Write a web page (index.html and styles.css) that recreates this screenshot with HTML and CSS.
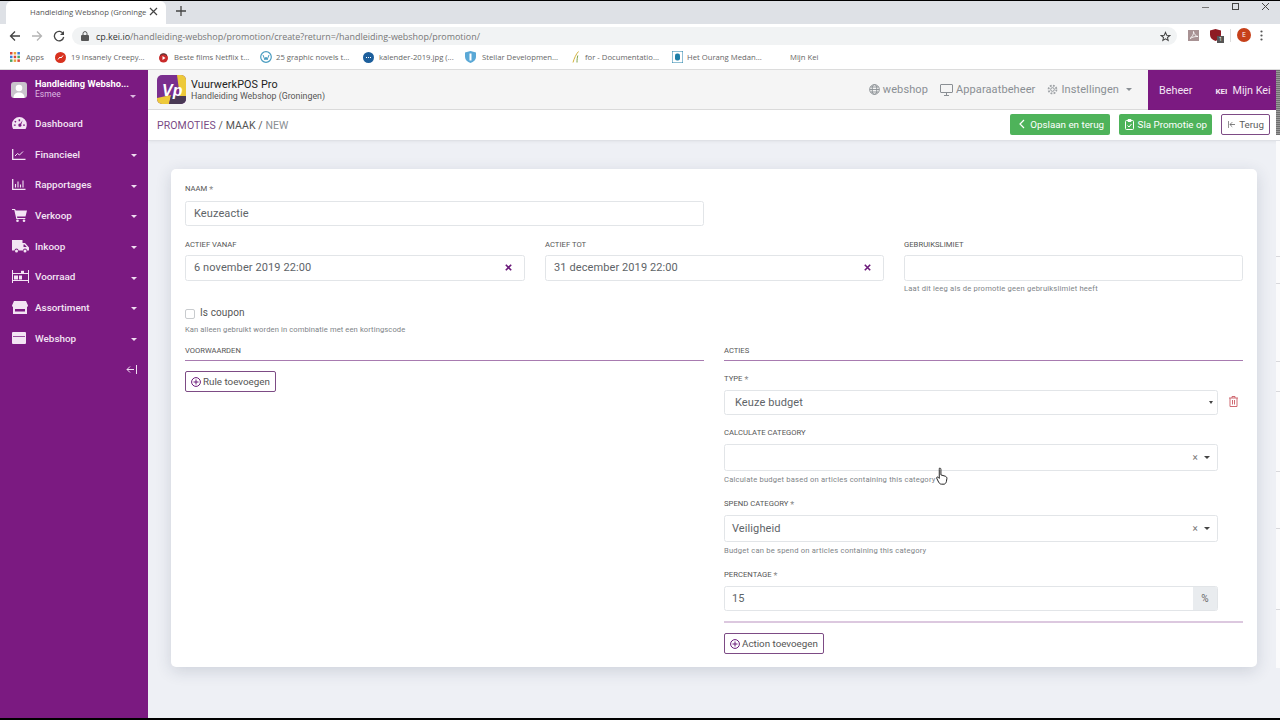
FILE: index.html
```html
<!DOCTYPE html>
<html lang="en">
<head>
    <meta charset="UTF-8">
    <meta name="viewport" content="width=device-width, initial-scale=1.0">
    <title>Handleiding Webshop</title>
    <link rel="stylesheet" href="styles.css">
</head>
<body>

    <div class="browser">
        <div class="tab-strip">
            <div class="tab">
                <span class="tab-title">Handleiding Webshop (Groninge</span>
                <svg class="tab-close" width="9" height="9" viewBox="0 0 9 9"><path d="M1 1l7 7M8 1L1 8" stroke="#444" stroke-width="1.2"/></svg>
            </div>
            <svg class="tab-new" width="10" height="10" viewBox="0 0 10 10"><path d="M5 0v10M0 5h10" stroke="#444" stroke-width="1.3"/></svg>
            <div class="window-buttons">
                <svg width="10" height="10" viewBox="0 0 10 10"><path d="M1 5.5h7" stroke="#777"/></svg>
                <svg width="10" height="10" viewBox="0 0 10 10"><rect x="1.5" y="1.5" width="6" height="6" fill="none" stroke="#444"/></svg>
                <svg width="10" height="10" viewBox="0 0 10 10"><path d="M1 1l7 7M8 1L1 8" stroke="#444"/></svg>
            </div>
        </div>
        <div class="toolbar">
            <svg class="nav-icon" width="12" height="12" viewBox="0 0 12 12"><path d="M11 6H1.5M6 1.5L1.5 6 6 10.5" fill="none" stroke="#444" stroke-width="1.3"/></svg>
            <svg class="nav-icon" width="12" height="12" viewBox="0 0 12 12"><path d="M1 6h9.5M6 1.5L10.5 6 6 10.5" fill="none" stroke="#b4b4b4" stroke-width="1.3"/></svg>
            <svg class="nav-icon" width="12" height="12" viewBox="0 0 12 12"><path d="M10.3 4A4.7 4.7 0 1 0 10.7 7" fill="none" stroke="#444" stroke-width="1.3"/><path d="M11 1v4H7z" fill="#444"/></svg>
            <div class="omnibox">
                <svg width="8" height="10" viewBox="0 0 8 10"><rect y="4" width="8" height="6" rx="1" fill="#555"/><path d="M2 4V2.6a2 2 0 0 1 4 0V4" fill="none" stroke="#555"/></svg>
                <span class="url"><b>cp.kei.io</b>/handleiding-webshop/promotion/create?return=/handleiding-webshop/promotion/</span>
                <svg class="star" width="11" height="11" viewBox="0 0 24 24"><path d="M12 3l2.7 6.2 6.7.6-5.1 4.4 1.6 6.6L12 17.3l-5.9 3.5 1.6-6.6L2.6 9.8l6.7-.6z" fill="none" stroke="#444" stroke-width="2.2"/></svg>
            </div>
            <div class="extensions">
                <span class="ext-pdf">
                    <svg width="10" height="10" viewBox="0 0 10 10"><path d="M1 8.5C3 7 5 4 4.5 1.5 5 4 6.5 6 9 6.5 6.5 6.3 3.5 7 1 8.5z" fill="none" stroke="#fff" stroke-width=".8"/></svg>
                </span>
                <span class="ext-shield">
                    <svg width="11" height="12" viewBox="0 0 11 12"><path d="M5.5 0L11 1.5V6c0 3-2.5 5-5.5 6C2.5 11 0 9 0 6V1.5z" fill="#8e1b24"/></svg>
                    <span class="ext-count">1</span>
                </span>
                <span class="ext-sep"></span>
                <span class="profile">E</span>
                <svg width="3" height="11" viewBox="0 0 3 11"><circle cx="1.5" cy="1.5" r="1.1" fill="#555"/><circle cx="1.5" cy="5.5" r="1.1" fill="#555"/><circle cx="1.5" cy="9.5" r="1.1" fill="#555"/></svg>
            </div>
        </div>
        <div class="bookmarks">
            <span class="bookmark bookmark-apps">
                <svg width="10" height="10" viewBox="0 0 10 10">
                    <rect width="2.5" height="2.5" fill="#d9473a"/><rect x="3.7" width="2.5" height="2.5" fill="#e8a33d"/><rect x="7.4" width="2.5" height="2.5" fill="#3c7dd9"/>
                    <rect y="3.7" width="2.5" height="2.5" fill="#3c7dd9"/><rect x="3.7" y="3.7" width="2.5" height="2.5" fill="#d9473a"/><rect x="7.4" y="3.7" width="2.5" height="2.5" fill="#4aa564"/>
                    <rect y="7.4" width="2.5" height="2.5" fill="#4aa564"/><rect x="3.7" y="7.4" width="2.5" height="2.5" fill="#e8a33d"/><rect x="7.4" y="7.4" width="2.5" height="2.5" fill="#d9473a"/>
                </svg>
                Apps
            </span>
            <span class="bookmark bookmark-creepy"><svg width="11" height="11" viewBox="0 0 11 11"><circle cx="5.5" cy="5.5" r="5.5" fill="#d8321f"/><path d="M3 7.5l2-2.5 1 1 2-2.5" fill="none" stroke="#fff"/></svg>19 Insanely Creepy...</span>
            <span class="bookmark bookmark-films"><svg width="11" height="11" viewBox="0 0 11 11"><circle cx="5.5" cy="6" r="4.5" fill="#c92a2a"/><path d="M2 3.5a4.5 4.5 0 0 1 7 0" fill="none" stroke="#333"/><path d="M4.5 4v4l3-2z" fill="#fff"/></svg>Beste films Netflix t...</span>
            <span class="bookmark bookmark-novels"><svg width="12" height="12" viewBox="0 0 12 12"><circle cx="6" cy="6" r="5.3" fill="#fff" stroke="#4a9cc0" stroke-width="1.2"/><path d="M3 4l2 5 1-3 1 3 2-5" fill="none" stroke="#4a9cc0"/></svg>25 graphic novels t...</span>
            <span class="bookmark bookmark-kalender"><svg width="11" height="11" viewBox="0 0 11 11"><circle cx="5.5" cy="5.5" r="5.5" fill="#1d5f9c"/><path d="M3 5.5h5" stroke="#fff" stroke-dasharray="1 1"/></svg>kalender-2019.jpg (...</span>
            <span class="bookmark bookmark-stellar"><svg width="11" height="12" viewBox="0 0 11 12"><path d="M5.5 0L11 1.5V6c0 3-2.5 5-5.5 6C2.5 11 0 9 0 6V1.5z" fill="#5aa8d6"/><path d="M5.5 2.5v7" stroke="#fff" stroke-width="2"/></svg>Stellar Developmen...</span>
            <span class="bookmark bookmark-docs"><svg width="8" height="12" viewBox="0 0 8 12"><path d="M1 11.5C2 8 4 3 6.5.5" fill="none" stroke="#d4b23c"/><path d="M5 11.5c0-3 .3-5 .8-7" fill="none" stroke="#7da34a"/></svg>for - Documentatio...</span>
            <span class="bookmark bookmark-ourang"><svg width="11" height="12" viewBox="0 0 11 12"><rect width="11" height="12" fill="#fff" stroke="#1e7fa8"/><rect x="3" y="2.5" width="5" height="7" rx="2" fill="#1e7fa8"/></svg>Het Ourang Medan...</span>
            <span class="bookmark bookmark-kei">Mijn Kei</span>
        </div>
    </div>

    <div class="app">
        <aside class="sidebar">
            <div class="account">
                <div class="avatar">
                    <svg width="16" height="16" viewBox="0 0 16 16"><circle cx="8" cy="6" r="3.3" fill="#fff"/><path d="M2.5 16c0-4 2.5-5.5 5.500-5.500s5.500 1.500 5.500 5.500z" fill="#fff"/></svg>
                </div>
                <div class="account-text">
                    <div class="account-name">Handleiding Websho...</div>
                    <div class="account-user">Esmee</div>
                </div>
                <span class="account-caret"></span>
            </div>
            <nav class="menu">
                <a class="menu-item">
                    <svg class="menu-icon" preserveAspectRatio="xMinYMid meet" width="15" height="12" viewBox="0 0 16 13"><path fill-rule="evenodd" d="M8 0a8 8 0 0 1 8 8c0 2-.5 3.5-1.3 5H1.300C.5 11.500 0 10 0 8a8 8 0 0 1 8-8zM7.200 2.500v2h1.600v-2zM3.500 4L2.500 5.200l1.300 1 1-1.200zM2 8v1.500h2V8zM12 8v1.500h2V8zM11.500 3.500L8.800 7.200a1.700 1.700 0 1 0 1.200.8z"/></svg>
                    Dashboard
                </a>
                <a class="menu-item">
                    <svg class="menu-icon" preserveAspectRatio="xMinYMid meet" width="13" height="11" viewBox="0 0 14 11"><path d="M.7 0v10.300H13.500" fill="none" stroke="currentColor" stroke-width="1.300"/><path d="M3 7l2.500-2.500L7.500 6l3.500-3.500" fill="none" stroke="currentColor"/></svg>
                    Financieel<span class="caret"></span>
                </a>
                <a class="menu-item">
                    <svg class="menu-icon" preserveAspectRatio="xMinYMid meet" width="13" height="11" viewBox="0 0 14 11"><path d="M.7 0v10.300H13.500" fill="none" stroke="currentColor" stroke-width="1.300"/><path d="M3.500 8.500V5M6 8.500V2.500M8.500 8.500V5.500M11 8.500V1.500" stroke="currentColor" stroke-width="1.100"/></svg>
                    Rapportages<span class="caret"></span>
                </a>
                <a class="menu-item">
                    <svg class="menu-icon" preserveAspectRatio="xMinYMid meet" width="15" height="13" viewBox="0 0 15 13"><path d="M0 0h3l.8 1.500H15L13.500 7.500H5l.3 1.500h8v1H4.300L2.300 1H0z"/><circle cx="5.500" cy="11.700" r="1.300"/><circle cx="12" cy="11.700" r="1.300"/></svg>
                    Verkoop<span class="caret"></span>
                </a>
                <a class="menu-item">
                    <svg class="menu-icon" preserveAspectRatio="xMinYMid meet" width="17" height="13" viewBox="0 0 17 13"><path fill-rule="evenodd" d="M0 0h10.500v3H13l4 4.500V10.500h-2a2 2 0 0 0-4 0H6.500a2 2 0 0 0-4 0H0zM11.500 4.500V7h3.300l-2.200-2.500z"/><circle cx="4.500" cy="11" r="1.500"/><circle cx="13" cy="11" r="1.500"/></svg>
                    Inkoop<span class="caret"></span>
                </a>
                <a class="menu-item">
                    <svg class="menu-icon" preserveAspectRatio="xMinYMid meet" width="17" height="13" viewBox="0 0 17 13"><path d="M.5 0v13M16.500 0v13" stroke="currentColor"/><path d="M1 3.500h15M1 10.500h15" stroke="currentColor"/><rect x="2" y="5.500" width="4" height="4"/><rect x="7" y="5.500" width="3" height="4"/><rect x="9" y=".8" width="3" height="2.500"/></svg>
                    Voorraad<span class="caret"></span>
                </a>
                <a class="menu-item">
                    <svg class="menu-icon" preserveAspectRatio="xMinYMid meet" width="16" height="13" viewBox="0 0 16 13"><path fill-rule="evenodd" d="M2 0h12l2 4.500a2 2 0 0 1-1 1.500v7H1V6a2 2 0 0 1-1-1.500zM3 8v2.500h10V8z"/></svg>
                    Assortiment<span class="caret"></span>
                </a>
                <a class="menu-item">
                    <svg class="menu-icon" preserveAspectRatio="xMinYMid meet" width="14" height="12" viewBox="0 0 14 12"><path fill-rule="evenodd" d="M1 0h12a1 1 0 0 1 1 1v10a1 1 0 0 1-1 1H1a1 1 0 0 1-1-1V1a1 1 0 0 1 1-1zM1 4v.800h12V4z"/></svg>
                    Webshop<span class="caret"></span>
                </a>
            </nav>
            <div class="collapse">
                <svg width="11" height="9" viewBox="0 0 11 9"><path d="M10.500 0v9" stroke="currentColor"/><path d="M8 4.500H1M4 1.500l-3 3 3 3" fill="none" stroke="currentColor"/></svg>
            </div>
        </aside>

        <main class="main">
            <header class="topbar">
                <div class="brand">
                    <svg class="logo" width="29" height="29" viewBox="0 0 29 29">
                        <rect width="29" height="29" rx="5" fill="#7a2f8e"/>
                        <path d="M20 0h4a5 5 0 0 1 5 5v17h-6z" fill="#edc93a"/>
                        <path d="M0 23l14-3-2 9H5a5 5 0 0 1-5-5z" fill="#edc93a"/>
                        <path d="M12 29l2-8h15v3a5 5 0 0 1-5 5z" fill="#4a3a55"/>
                        <text x="5" y="21" class="logo-text">Vp</text>
                    </svg>
                    <div class="brand-text">
                        <div class="brand-name">VuurwerkPOS Pro</div>
                        <div class="brand-sub">Handleiding Webshop (Groningen)</div>
                    </div>
                </div>
                <nav class="topnav">
                    <a class="topnav-item">
                        <svg width="11" height="11" viewBox="0 0 12 12" fill="none" stroke="currentColor"><circle cx="6" cy="6" r="5.300"/><ellipse cx="6" cy="6" rx="2.500" ry="5.300"/><path d="M.7 6h10.600M1.500 3.300h9M1.500 8.700h9"/></svg>
                        webshop
                    </a>
                    <a class="topnav-item">
                        <svg width="13" height="12" viewBox="0 0 13 12" fill="none" stroke="currentColor"><rect x=".5" y=".5" width="12" height="8" rx=".5"/><path d="M4 11.500h5M6.500 9v2.500" /></svg>
                        Apparaatbeheer
                    </a>
                    <a class="topnav-item">
                        <svg width="11" height="11" viewBox="0 0 12 12" fill="none" stroke="currentColor"><circle cx="6" cy="6" r="2"/><circle cx="6" cy="6" r="4.300" stroke-width="2" stroke-dasharray="2 1.370" opacity=".8"/></svg>
                        Instellingen<span class="topnav-caret"></span>
                    </a>
                </nav>
                <div class="account-tabs">
                    <a class="account-tab">Beheer</a>
                    <a class="account-tab account-tab-kei"><small>KEI</small>Mijn Kei</a>
                </div>
            </header>

            <div class="breadcrumb-bar">
                <div class="breadcrumbs">
                    <a class="crumb-link">PROMOTIES</a> / <span class="crumb-mid">MAAK</span> / <span class="crumb-new">NEW</span>
                </div>
                <div class="actions">
                    <a class="btn btn-green">
                        <svg width="6" height="10" viewBox="0 0 6 10"><path d="M5 1L1 5l4 4" fill="none" stroke="currentColor" stroke-width="1.200"/></svg>
                        Opslaan en terug
                    </a>
                    <a class="btn btn-green">
                        <svg width="9" height="11" viewBox="0 0 9 11" fill="none" stroke="currentColor"><rect x=".5" y="1.500" width="8" height="9" rx="1"/><path d="M3 .5h3v2H3zM2.500 6.500l1.500 1.500 2.500-3"/></svg>
                        Sla Promotie op
                    </a>
                    <a class="btn btn-outline">
                        <svg width="10" height="9" viewBox="0 0 10 9" fill="none" stroke="currentColor"><path d="M.5 0v9M10 4.500H2.500M5.500 1.500l-3 3 3 3"/></svg>
                        Terug
                    </a>
                </div>
            </div>

            <div class="content">
                <section class="card">
                    <div class="field field-name">
                        <label class="field-label">NAAM <i>*</i></label>
                        <div class="input">Keuzeactie</div>
                    </div>

                    <div class="row-three">
                        <div class="field">
                            <label class="field-label">ACTIEF VANAF</label>
                            <div class="input input-date">6 november 2019 22:00
                                <svg width="7" height="7" viewBox="0 0 7 7"><path d="M.8.8l5.400 5.400M6.200.8L.8 6.200" stroke="#6b1a7a" stroke-width="1.600"/></svg>
                            </div>
                        </div>
                        <div class="field">
                            <label class="field-label">ACTIEF TOT</label>
                            <div class="input input-date">31 december 2019 22:00
                                <svg width="7" height="7" viewBox="0 0 7 7"><path d="M.8.8l5.400 5.400M6.200.8L.8 6.200" stroke="#6b1a7a" stroke-width="1.600"/></svg>
                            </div>
                        </div>
                        <div class="field">
                            <label class="field-label">GEBRUIKSLIMIET</label>
                            <div class="input input-date"></div>
                            <p class="help">Laat dit leeg als de promotie geen gebruikslimiet heeft</p>
                        </div>
                    </div>

                    <div class="coupon">
                        <div class="coupon-check">
                            <span class="checkbox"></span>
                            <span class="coupon-label">Is coupon</span>
                        </div>
                        <p class="help">Kan alleen gebruikt worden in combinatie met een kortingscode</p>
                    </div>

                    <div class="columns">
                        <div class="column">
                            <h4 class="section-title">VOORWAARDEN</h4>
                            <a class="btn-add">
                                <svg width="10" height="10" viewBox="0 0 10 10" fill="none" stroke="#6b1a7a"><circle cx="5" cy="5" r="4.400"/><path d="M5 2.500v5M2.500 5h5"/></svg>
                                Rule toevoegen
                            </a>
                        </div>
                        <div class="column">
                            <h4 class="section-title">ACTIES</h4>
                            <div class="action-block">
                                <div class="field field-type">
                                    <label class="field-label">TYPE <i>*</i></label>
                                    <div class="type-row">
                                        <div class="input input-select">Keuze budget<span class="select-arrow"></span></div>
                                        <svg class="trash" width="9" height="11" viewBox="0 0 9 11" fill="none" stroke="#cf6a72"><path d="M0 2h9M3 2V.5h3V2M1 2v8.500h7V2M3.500 4v4.500M5.500 4v4.500"/></svg>
                                    </div>
                                </div>
                                <div class="field field-wide">
                                    <label class="field-label">CALCULATE CATEGORY</label>
                                    <div class="input input-tall"><span class="tall-value"></span><span class="clear">×</span><span class="tall-arrow"></span></div>
                                    <p class="help">Calculate budget based on articles containing this category</p>
                                </div>
                                <div class="field field-wide">
                                    <label class="field-label">SPEND CATEGORY <i>*</i></label>
                                    <div class="input input-tall"><span class="tall-value">Veiligheid</span><span class="clear">×</span><span class="tall-arrow"></span></div>
                                    <p class="help">Budget can be spend on articles containing this category</p>
                                </div>
                                <div class="field field-wide">
                                    <label class="field-label">PERCENTAGE <i>*</i></label>
                                    <div class="input input-group"><span class="group-value">15</span><span class="group-addon">%</span></div>
                                </div>
                            </div>
                            <div class="action-divider"></div>
                            <a class="btn-add">
                                <svg width="10" height="10" viewBox="0 0 10 10" fill="none" stroke="#6b1a7a"><circle cx="5" cy="5" r="4.400"/><path d="M5 2.500v5M2.500 5h5"/></svg>
                                Action toevoegen
                            </a>
                        </div>
                    </div>
                </section>
            </div>
        </main>
    </div>

    <svg class="cursor" width="12" height="18" viewBox="0 0 11 16"><path d="M3 1c.8-.6 1.500 0 1.500 1v5l4 1.200c1 .4 1.500 1 1.500 2l-.5 3c-.3 1.200-1 2-2 2.300H5c-1 0-1.800-.6-2.500-1.700L.6 10c-.3-.7.500-1.500 1.400-.8l1 1V2z" fill="#fff" stroke="#222" stroke-width=".9"/></svg>
    <div class="edge-top"></div>
    <div class="edge-page">
        <span class="edge-line edge-line-1"></span>
        <span class="edge-line edge-line-2"></span>
        <span class="edge-line edge-line-3"></span>
        <span class="edge-line edge-line-4"></span>
        <span class="edge-line edge-line-5"></span>
        <span class="edge-line edge-line-6"></span>
        <span class="edge-line edge-line-7"></span>
    </div>

</body>
</html>
```

FILE: styles.css
```css
* {
    box-sizing: border-box;
}
body {
    margin: 0;
    height: 720px;
    overflow: hidden;
    display: flex;
    flex-direction: column;
    position: relative;
    font-family: Roboto, 'Liberation Sans', sans-serif;
    color: #495057;
    background-color: #eef0f5;
    border-top: 1px solid #000;
    border-bottom: 2px solid #000;
}

/* browser chrome */
.browser {
    flex: none;
    font-family: 'Open Sans', 'Liberation Sans', sans-serif;
}
.tab-strip {
    height: 23px;
    display: flex;
    align-items: flex-end;
    background-color: #dee1e6;
    padding-left: 6px;
}
.tab {
    width: 160px;
    height: 23px;
    display: flex;
    align-items: center;
    justify-content: space-between;
    padding: 0 8px 2px 24px;
    background-color: #fff;
    border-radius: 6px 6px 0 0;
    font-size: 7.7px;
    color: #555;
}
.tab-title {
    white-space: nowrap;
}
.tab-new {
    margin: 0 0 8px 10px;
}
.window-buttons {
    margin-left: auto;
    align-self: flex-start;
    display: flex;
    gap: 20px;
    padding: 0 9px 0 0;
    height: 12px;
    align-items: center;
}
.toolbar {
    height: 21px;
    display: flex;
    align-items: flex-end;
    background-color: #fff;
    padding-left: 9px;
    gap: 10px;
}
.nav-icon {
    flex: none;
    margin-bottom: 3px;
}
.omnibox {
    flex: none;
    width: 1105px;
    height: 18px;
    margin-left: -3px;
    display: flex;
    align-items: center;
    gap: 7px;
    padding: 0 6px 0 9px;
    background-color: #f1f3f4;
    border-radius: 9px;
    font-size: 8.95px;
    color: #777;
}
.url b {
    font-weight: 400;
    color: #333;
}
.star {
    margin-left: auto;
}
.extensions {
    display: flex;
    align-items: center;
    gap: 9px;
    margin-left: 1px;
    margin-bottom: 3px;
}
.ext-pdf {
    width: 11px;
    height: 11px;
    display: flex;
    align-items: center;
    justify-content: center;
    background-color: #a89294;
}
.ext-shield {
    position: relative;
    display: flex;
    margin-left: 2px;
}
.ext-count {
    position: absolute;
    right: -3px;
    bottom: -2px;
    width: 7px;
    height: 7px;
    background-color: #555;
    color: #fff;
    font-size: 6px;
    line-height: 7px;
    text-align: center;
}
.ext-sep {
    width: 1px;
    height: 13px;
    background-color: #ddd;
    margin: 0 -3px 0 0;
}
.profile {
    width: 14px;
    height: 14px;
    border-radius: 50%;
    background-color: #c6401a;
    color: #fff;
    font-size: 7px;
    line-height: 14px;
    text-align: center;
}
.bookmarks {
    height: 25px;
    display: flex;
    align-items: center;
    background-color: #fff;
    border-bottom: 1px solid #dcdcdc;
    font-size: 7.7px;
    color: #666;
    padding-left: 10px;
    white-space: nowrap;
}
.bookmark {
    display: flex;
    align-items: center;
    gap: 5px;
}
.bookmark-apps { width: 45px; gap: 6px; }
.bookmark-creepy { width: 103px; }
.bookmark-films { width: 102px; }
.bookmark-novels { width: 103px; gap: 4px; }
.bookmark-kalender { width: 102px; }
.bookmark-stellar { width: 103px; gap: 6px; }
.bookmark-docs { width: 104px; padding-left: 4px; }
.bookmark-ourang { width: 118px; gap: 4px; }

/* app */
.app {
    flex: 1;
    min-height: 0;
    display: flex;
}
.sidebar {
    flex: none;
    width: 148px;
    display: flex;
    flex-direction: column;
    background-color: #7b1a81;
    color: #fff;
}
.account {
    height: 38px;
    display: flex;
    align-items: center;
    padding: 0 11px;
    position: relative;
}
.avatar {
    flex: none;
    width: 16px;
    height: 16px;
    margin-top: 2px;
    border-radius: 3px;
    overflow: hidden;
    background-color: #c9c4cc;
}
.account-text {
    margin-left: 8px;
    line-height: 10px;
}
.account-name {
    font-size: 9.3px;
    font-weight: 700;
    white-space: nowrap;
}
.account-user {
    font-size: 8.5px;
    color: #dcb9e0;
}
.account-caret {
    position: absolute;
    right: 12px;
    top: 25px;
    border-style: solid;
    border-width: 3px 3px 0;
    border-color: #dcb9e0 transparent transparent;
}
.menu {
    display: flex;
    flex-direction: column;
}
.menu-item {
    height: 30.7px;
    display: flex;
    align-items: center;
    padding: 0 11px 0 12px;
    font-size: 9.9px;
    font-weight: 500;
    color: #f3e4f4;
}
.menu-icon {
    width: 23px;
    flex: none;
    fill: currentColor;
}
.caret {
    margin-left: auto;
    margin-top: 3px;
    border-style: solid;
    border-width: 3.5px 3px 0;
    border-color: #f0dff2 transparent transparent;
}
.collapse {
    display: flex;
    justify-content: flex-end;
    padding: 11px 11px 0 0;
    color: #f0dff2;
}
.main {
    flex: 1;
    min-width: 0;
    display: flex;
    flex-direction: column;
}
.topbar {
    flex: none;
    height: 40px;
    display: flex;
    align-items: center;
    padding-left: 9px;
    background-color: #f5f5f5;
    border-bottom: 1px solid #dcdcdc;
}
.brand {
    display: flex;
    align-items: center;
    gap: 5px;
}
.brand-text {
    padding-top: 1px;
}
.logo-text {
    font-family: 'Liberation Sans', sans-serif;
    font-size: 16px;
    font-weight: 700;
    font-style: italic;
    fill: #fff;
}
.brand-name {
    font-size: 10.8px;
    line-height: 12px;
    color: #222;
    letter-spacing: .1px;
}
.brand-sub {
    font-size: 8.8px;
    line-height: 10px;
    color: #555;
}
.topnav {
    margin-left: auto;
    display: flex;
    gap: 12px;
    color: #8a8f94;
    font-size: 11px;
    padding-right: 16px;
}
.topnav-item {
    display: flex;
    align-items: center;
    gap: 3px;
    letter-spacing: .1px;
}
.topnav-caret {
    margin-left: 4px;
    border-style: solid;
    border-width: 3.5px 3.5px 0;
    border-color: #8a8f94 transparent transparent;
}
.account-tabs {
    align-self: stretch;
    margin-bottom: -1px;
    display: flex;
    align-items: center;
    background-color: #7b1a81;
    color: #f3e4f4;
    font-size: 10.8px;
    width: 132px;
    padding-left: 11px;
}
.account-tab-kei {
    margin-left: 23px;
    white-space: nowrap;
}
.account-tab-kei small {
    font-size: 8px;
    font-weight: 700;
    margin-right: 5px;
}
.breadcrumb-bar {
    flex: none;
    height: 31px;
    display: flex;
    align-items: center;
    justify-content: space-between;
    padding: 0 10px 0 9px;
    background-color: #fff;
    border-bottom: 1px solid #dfe1e6;
    box-shadow: 0 1px 3px rgba(0, 0, 0, 0.05);
}
.breadcrumbs {
    font-size: 10.5px;
    color: #555;
    letter-spacing: .1px;
}
.crumb-link {
    color: #7a4a86;
}
.crumb-new {
    color: #8a8f94;
}
.actions {
    display: flex;
    gap: 9px;
    margin-bottom: 2px;
}
.btn {
    height: 21px;
    display: flex;
    align-items: center;
    gap: 4px;
    border-radius: 2px;
    font-size: 9.8px;
    padding: 0 5px 0 5.5px;
}
.btn:first-child {
    gap: 5px;
    padding: 0 6px 0 9px;
}
.btn-green {
    background-color: #4eb35a;
    color: #fff;
}
.btn-outline {
    background-color: #fff;
    border: 1px solid #7d4b85;
    color: #5c5c5c;
    width: 49px;
}
.content {
    flex: 1;
    min-height: 0;
    padding: 28px 23px 0;
}
.card {
    background-color: #fff;
    border-radius: 5px;
    box-shadow: 0 4px 16px rgba(40, 50, 80, 0.16);
    padding: 15px 14px 14px;
    height: 498px;
}
.field-label {
    display: block;
    font-size: 7.7px;
    line-height: 10px;
    color: #555;
    margin-bottom: 6px;
}
.field-label i {
    font-style: normal;
    color: #888;
    font-size: 9px;
    line-height: 0;
    vertical-align: -2px;
}
.input {
    height: 25px;
    display: flex;
    align-items: center;
    padding: 0 8px;
    background-color: #fff;
    border: 1px solid #e2e5e8;
    border-radius: 2.5px;
    font-size: 11px;
    color: #5e6468;
    letter-spacing: .1px;
}
.field-name {
    width: 519px;
}
.field-name .field-label {
    margin-bottom: 7px;
}
.row-three {
    display: grid;
    grid-template-columns: 340px 339px 339px;
    column-gap: 20px;
    margin-top: 14px;
}
.row-three .field-label {
    margin-bottom: 5px;
}
.input-date {
    height: 26px;
    justify-content: space-between;
    padding: 0 12px 1px 8px;
}
.help {
    margin: 4px 0 0;
    font-size: 7.6px;
    line-height: 9px;
    color: #808488;
    letter-spacing: .2px;
}
.row-three .help {
    margin-top: 3px;
}
.coupon {
    margin-top: 14px;
}
.coupon .help {
    margin-top: 6px;
    letter-spacing: .1px;
}
.coupon-check {
    display: flex;
    align-items: center;
    gap: 5px;
}
.checkbox {
    width: 10px;
    height: 10px;
    margin-top: 2px;
    border: 1px solid #c8cbce;
    border-radius: 2px;
    background-color: #fff;
}
.coupon-label {
    font-size: 10px;
    line-height: 12px;
    color: #555;
    letter-spacing: .1px;
}
.columns {
    display: grid;
    grid-template-columns: 519px 519px;
    column-gap: 20px;
    margin-top: 12px;
}
.section-title {
    margin: 0 0 10px;
    height: 15px;
    font-size: 7.6px;
    font-weight: 400;
    line-height: 10px;
    color: #555;
    border-bottom: 1px solid #a87bb0;
}
.btn-add {
    height: 21px;
    display: inline-flex;
    align-items: center;
    gap: 2px;
    padding: 0 5px;
    border: 1px solid #7d4b85;
    border-radius: 2px;
    font-size: 9.8px;
    color: #555;
}
.action-block {
    display: flex;
    flex-direction: column;
}
.field-type {
    margin-top: 3px;
}
.type-row {
    display: flex;
    align-items: center;
    gap: 11px;
}
.input-select {
    width: 494px;
    justify-content: space-between;
    padding: 0 4px 0 10px;
}
.select-arrow {
    border-style: solid;
    border-width: 3.5px 2.5px 0;
    border-color: #444 transparent transparent;
}
.trash {
    margin-top: -2px;
}
.field-wide {
    width: 494px;
}
.field-wide:nth-child(2) {
    margin-top: 13px;
}
.field-wide:nth-child(3) {
    margin-top: 15px;
}
.field-wide:nth-child(4) {
    margin-top: 15px;
}
.input-tall {
    height: 27px;
    padding: 0 7px;
}
.tall-value {
    flex: 1;
}
.clear {
    font-size: 10px;
    color: #777;
    margin-right: 6px;
}
.tall-arrow {
    border-style: solid;
    border-width: 3.5px 3.5px 0;
    border-color: #444 transparent transparent;
}
.input-group {
    padding: 0 0 0 7px;
    overflow: hidden;
}
.group-value {
    flex: 1;
}
.group-addon {
    width: 24px;
    height: 100%;
    display: flex;
    align-items: center;
    justify-content: center;
    background-color: #e9ecef;
    color: #666;
    font-size: 10px;
}
.action-divider {
    height: 2px;
    margin: 10px 0;
    background-color: #dcc8df;
}

/* things lying over the page: the pointer and the sliver of a second window at the right edge */
.cursor {
    position: absolute;
    left: 936px;
    top: 466px;
}
.edge-top {
    position: absolute;
    right: 0;
    top: 69px;
    width: 4px;
    height: 65px;
    background: repeating-linear-gradient(#6f6f6f 0, #6f6f6f 1px, #9a9a9a 1px, #9a9a9a 2px);
}
.edge-page {
    position: absolute;
    right: 0;
    top: 140px;
    width: 4px;
    height: 527px;
    background-color: #fbfbfc;
}
.edge-line {
    position: absolute;
    left: 0;
    right: 0;
    height: 1px;
    background-color: #d8d8dc;
}
.edge-line-1 { top: 115px; }
.edge-line-2 { top: 142px; }
.edge-line-3 { top: 220px; }
.edge-line-4 { top: 250px; }
.edge-line-5 { top: 330px; }
.edge-line-6 { top: 387px; }
.edge-line-7 { top: 468px; }
```
